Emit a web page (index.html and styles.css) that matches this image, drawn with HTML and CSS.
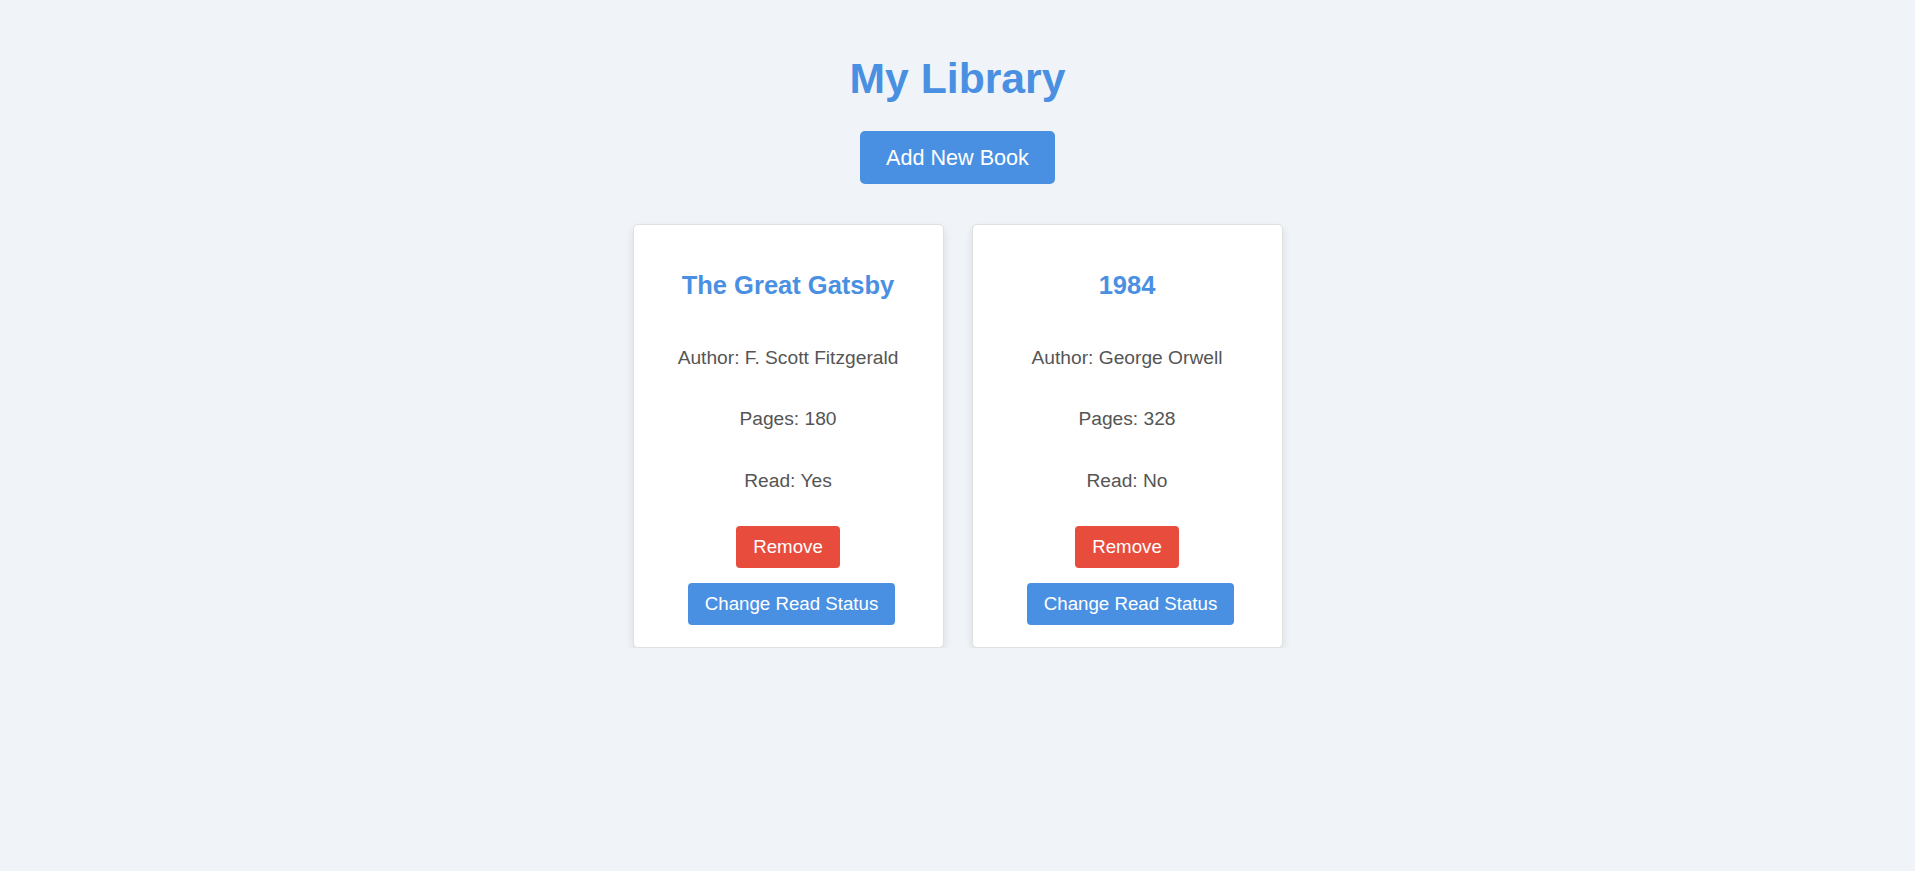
FILE: index.html
```html
<!DOCTYPE html>
<html lang="en">
<head>
<meta charset="utf-8">
<title>My Library</title>
<link rel="stylesheet" href="styles.css">
</head>
<body>
<header class="header">
  <h1 class="title">My Library</h1>
  <button class="btn btn-add">Add New Book</button>
</header>
<main class="library">
  <div class="card">
    <h2 class="card-title">The Great Gatsby</h2>
    <p class="card-line">Author: F. Scott Fitzgerald</p>
    <p class="card-line">Pages: 180</p>
    <p class="card-line last">Read: Yes</p>
    <div class="actions">
      <button class="btn btn-small btn-remove">Remove</button>
      <button class="btn btn-small btn-toggle">Change Read Status</button>
    </div>
  </div>
  <div class="card">
    <h2 class="card-title">1984</h2>
    <p class="card-line">Author: George Orwell</p>
    <p class="card-line">Pages: 328</p>
    <p class="card-line last">Read: No</p>
    <div class="actions">
      <button class="btn btn-small btn-remove">Remove</button>
      <button class="btn btn-small btn-toggle">Change Read Status</button>
    </div>
  </div>
</main>
</body>
</html>
```
FILE: styles.css
```css
* { box-sizing: border-box; }

body {
  margin: 0;
  background: #f0f4f8;
  font-family: "Liberation Sans", Arial, sans-serif;
  color: #555;
}

.header {
  display: flex;
  flex-direction: column;
  align-items: center;
}

.title {
  margin: 53.5px 0 28.5px;
  font-size: 42.7px;
  font-weight: bold;
  color: #4a90e2;
  line-height: normal;
}

.btn {
  font-family: "Liberation Sans", Arial, sans-serif;
  border: none;
  color: #fff;
  cursor: pointer;
}

.btn-add {
  background: #4a90e2;
  font-size: 21.6px;
  padding: 14px 26.5px;
  border-radius: 5px;
  line-height: 25px;
}

.library {
  display: flex;
  justify-content: center;
  gap: 28px;
  margin-top: 40px;
}

.card {
  width: 311px;
  background: #fff;
  border: 1px solid #e0e0e0;
  border-radius: 5px;
  box-shadow: 0 4px 8px rgba(0, 0, 0, 0.1);
  padding: 0 20px 21.5px;
  display: flex;
  flex-direction: column;
  align-items: center;
  text-align: center;
}

.card-title {
  margin: 46px 0 46.5px;
  font-size: 25.5px;
  font-weight: bold;
  color: #4a90e2;
  line-height: 29px;
}

.card-line {
  margin: 0 0 39.5px;
  font-size: 19.2px;
  line-height: 22px;
}

.card-line.last {
  margin-bottom: 34.5px;
}

.actions {
  display: flex;
  flex-direction: column;
  align-items: center;
  gap: 15px;
}

.btn-small {
  font-size: 18.7px;
  line-height: 22px;
  padding: 10px 17px;
  border-radius: 4px;
}

.btn-remove {
  background: #e74c3c;
}

.btn-toggle {
  background: #4a90e2;
  margin-left: 7px;
}
```
